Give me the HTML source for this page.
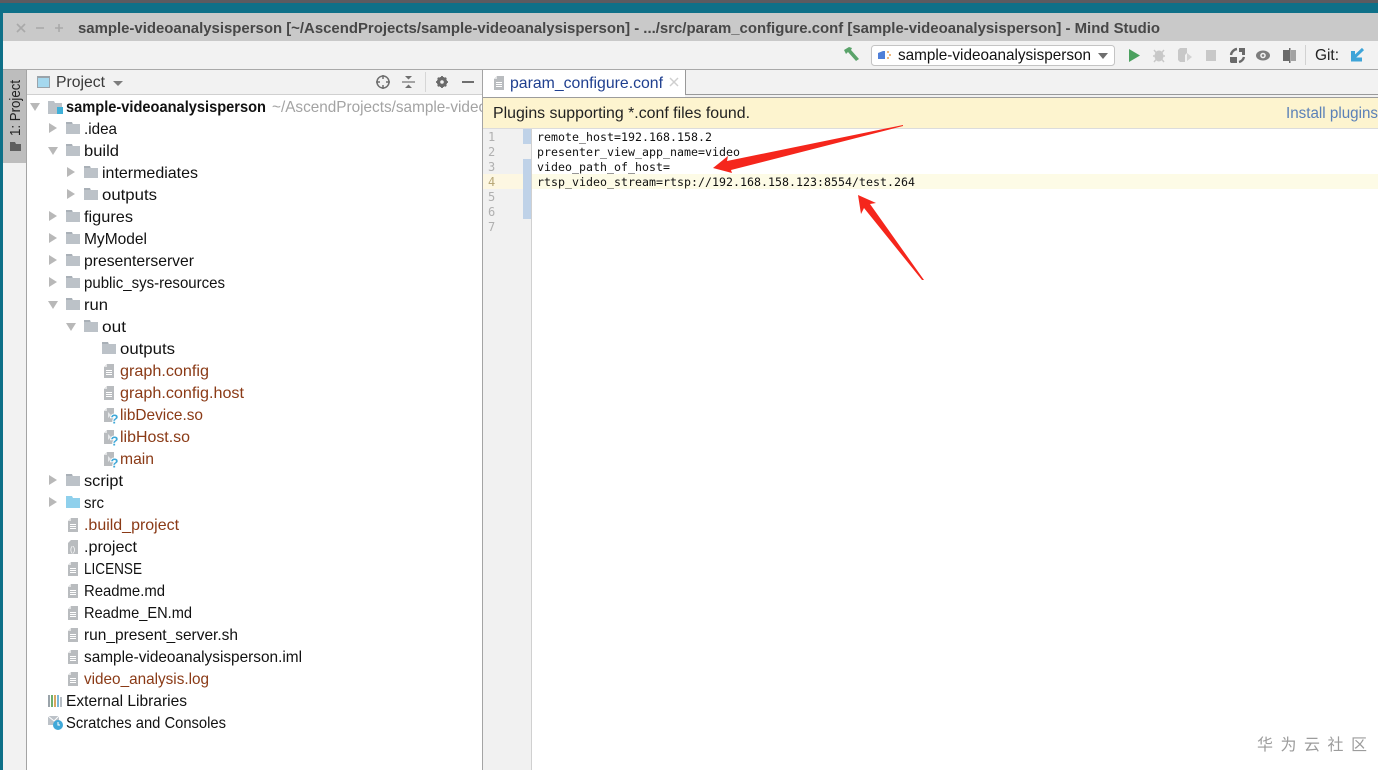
<!DOCTYPE html>
<html><head><meta charset="utf-8"><title>Mind Studio</title>
<style>
html,body{margin:0;padding:0;width:1378px;height:770px;overflow:hidden;background:#fff}
svg{display:block}
text{font-family:"Liberation Sans","DejaVu Sans",sans-serif;white-space:pre}
.t{font-size:16px;fill:#111}
.b{font-size:16px;fill:#8a3a16}
.m{font-family:"DejaVu Sans Mono","Liberation Mono",monospace;font-size:11.6px;fill:#111}
.n{font-family:"DejaVu Sans Mono","Liberation Mono",monospace;font-size:12px;fill:#b0b0b0}
</style></head><body>
<svg width="1378" height="770" viewBox="0 0 1378 770" xmlns="http://www.w3.org/2000/svg">
<defs>
<g id="fo"><path d="M0 0h6l1 2h7v10H0z" fill="#bcc2c8"/><rect y="0" width="6" height="2" fill="#a9b0b7"/></g>
<g id="fb"><path d="M0 0h6l1 2h7v10H0z" fill="#8fd0ec"/></g>
<g id="r"><path d="M0 0l8 5-8 5z" fill="#b8b8b8"/></g>
<g id="d"><path d="M0 0h10l-5 8z" fill="#b8b8b8"/></g>
<g id="f"><path d="M3 0h7v14H0V3z" fill="#b9bcbf"/><path d="M3 0v3H0z" fill="#e3e4e5"/><path d="M2 6.500h6M2 8.500h6M2 10.500h6" stroke="#fff" stroke-width="1"/></g>
<g id="q"><path d="M3 0h7v14H0V3z" fill="#b9bcbf"/><path d="M3 0v3H0z" fill="#e3e4e5"/><path d="M4 4l3 3-3 3z" fill="#e6e8ea"/><text x="6.500" y="15.500" stroke="#fff" stroke-width="2" paint-order="stroke" style="font-size:13px;font-weight:bold;fill:#3fa8d8">?</text></g>
</defs>

<!-- desktop and window -->
<rect width="1378" height="4" fill="#5b5b60"/>
<rect y="3" width="1378" height="10" fill="#0e7088"/>
<rect y="3" width="3" height="767" fill="#0e7088"/>
<rect x="3" y="13" width="1375" height="28" fill="#c9c9c9"/>
<rect x="3" y="41" width="1375" height="28" fill="#f2f2f2"/>
<rect x="3" y="69" width="1375" height="1" fill="#a9a9a9"/>

<!-- title bar -->
<path d="M17 24l8 8M25 24l-8 8" stroke="#a9a9a9" stroke-width="1.600"/>
<path d="M36 28h8" stroke="#a9a9a9" stroke-width="1.600"/>
<path d="M55 28h8M59 24v8" stroke="#a9a9a9" stroke-width="1.600"/>
<text x="78" y="33" textLength="1082" lengthAdjust="spacingAndGlyphs" style="font-size:15px;font-weight:bold;fill:#474747">sample-videoanalysisperson [~/AscendProjects/sample-videoanalysisperson] - .../src/param_configure.conf [sample-videoanalysisperson] - Mind Studio</text>

<!-- toolbar -->
<path d="M844 50l5-3 3 1-1 2 8 9-3 2-8-9-2 2z" fill="#5aa36a"/>
<rect x="871.500" y="45.500" width="243" height="20" rx="3" fill="#fff" stroke="#c4c4c4"/>
<path d="M878 53l5-2h2v8h-7z" fill="#4f7fd8"/>
<path d="M887 51h2v2h-2zM889 54h2v2h-2zM887 57h2v2h-2z" fill="#eeb87e"/>
<text x="898" y="60" textLength="193" lengthAdjust="spacingAndGlyphs" class="t">sample-videoanalysisperson</text>
<path d="M1098 53h10l-5 6z" fill="#6e6e6e"/>
<path d="M1129 49l11 6.500-11 6.500z" fill="#4ca15f"/>
<ellipse cx="1159" cy="56" rx="4.500" ry="5.500" fill="#c8c8c8"/>
<path d="M1154 50l10 12M1164 50l-10 12M1153 56h12" stroke="#c8c8c8" stroke-width="1.400"/>
<path d="M1178 50l2-2h7v5l-2 2v7h-5l-2-2z" fill="#c8c8c8"/><path d="M1187 53l5 4-5 4z" fill="#d2d2d2"/>
<rect x="1206" y="50" width="10" height="11" fill="#c8c8c8"/>
<path d="M1239 48h6v7h-3v-3h-3zM1230 57h7v6h-6l-1-1z" fill="#6a6a6a"/>
<path d="M1231 55a7 7 0 0 1 6-6M1244 57a7 7 0 0 1-5 5" stroke="#6a6a6a" stroke-width="2.400" fill="none"/>
<ellipse cx="1263" cy="55.500" rx="7" ry="5" fill="#7d7d7d"/><circle cx="1263" cy="55.500" r="2.800" fill="#f2f2f2"/><circle cx="1263" cy="55.500" r="1.300" fill="#7d7d7d"/>
<path d="M1283 50h6v-2h1.500v15H1289v-2h-6z" fill="#6a6a6a"/><rect x="1291" y="50" width="5" height="11" fill="#a3a3a3"/>
<rect x="1305" y="45" width="1" height="20" fill="#d2d2d2"/>
<text x="1315" y="60" textLength="24" lengthAdjust="spacingAndGlyphs" style="font-size:15.500px;fill:#222">Git:</text>
<path d="M1363 49l-9 8.500" stroke="#3ea4d8" stroke-width="3" fill="none"/><path d="M1351 51h4v6.500h7v4h-11z" fill="#3ea4d8"/>

<!-- left stripe -->
<rect x="3" y="70" width="23" height="700" fill="#f2f2f2"/>
<rect x="3" y="70" width="23" height="93" fill="#bdbdbd"/>
<rect x="26" y="70" width="1" height="700" fill="#a4a4a4"/>
<text transform="translate(20 136) rotate(-90)" textLength="56" lengthAdjust="spacingAndGlyphs" style="font-size:14.500px;fill:#222">1: Project</text>
<path d="M10 142h5l1 2h5v7H10z" fill="#5f5f5f"/>

<!-- project header -->
<rect x="27" y="70" width="456" height="24" fill="#f2f2f2"/>
<rect x="27" y="94" width="456" height="1" fill="#d0d0d0"/>
<rect x="37.500" y="76.500" width="12" height="11" fill="#a5d8ee" stroke="#9aa3aa"/>
<rect x="37" y="76" width="13" height="2" fill="#9aa3aa"/>
<text x="56" y="87" textLength="49" lengthAdjust="spacingAndGlyphs" style="font-size:15.500px;fill:#3a3a3a">Project</text>
<path d="M113 81h10l-5 5z" fill="#7d7d7d"/>
<circle cx="383" cy="82" r="6" fill="none" stroke="#6f6f6f" stroke-width="1.500"/>
<path d="M383 75v4M383 85v4M376 82h4M386 82h4" stroke="#6f6f6f" stroke-width="1.500"/>
<path d="M402 82h13" stroke="#6f6f6f" stroke-width="1.200"/><path d="M405 76h7l-3.500 3.500zM405 88h7l-3.500-3.500z" fill="#6f6f6f"/>
<rect x="425" y="72" width="1" height="20" fill="#d6d6d6"/>
<circle cx="442" cy="82" r="3.800" fill="none" stroke="#6a6a6a" stroke-width="2.800"/>
<path d="M442 76v12M436 82h12M437.800 77.800l8.400 8.400M446.200 77.800l-8.400 8.400" stroke="#6a6a6a" stroke-width="1.800"/>
<circle cx="442" cy="82" r="1.800" fill="#f2f2f2"/>
<rect x="462" y="81" width="12" height="2" fill="#6f6f6f"/>

<!-- tree arrows -->
<use href="#d" x="30" y="103"/>
<use href="#r" x="49" y="123"/>
<use href="#d" x="48" y="147"/>
<use href="#r" x="67" y="167"/>
<use href="#r" x="67" y="189"/>
<use href="#r" x="49" y="211"/>
<use href="#r" x="49" y="233"/>
<use href="#r" x="49" y="255"/>
<use href="#r" x="49" y="277"/>
<use href="#d" x="48" y="301"/>
<use href="#d" x="66" y="323"/>
<use href="#r" x="49" y="475"/>
<use href="#r" x="49" y="497"/>

<!-- tree icons -->
<path d="M48 101h6l1 2h7v11H48z" fill="#bcc2c8"/><rect x="57" y="107" width="6" height="7" fill="#3fb0d8"/>
<use href="#fo" x="66" y="122"/>
<use href="#fo" x="66" y="144"/>
<use href="#fo" x="84" y="166"/>
<use href="#fo" x="84" y="188"/>
<use href="#fo" x="66" y="210"/>
<use href="#fo" x="66" y="232"/>
<use href="#fo" x="66" y="254"/>
<use href="#fo" x="66" y="276"/>
<use href="#fo" x="66" y="298"/>
<use href="#fo" x="84" y="320"/>
<use href="#fo" x="102" y="342"/>
<use href="#f" x="104" y="364"/>
<use href="#f" x="104" y="386"/>
<use href="#q" x="104" y="408"/>
<use href="#q" x="104" y="430"/>
<use href="#q" x="104" y="452"/>
<use href="#fo" x="66" y="474"/>
<use href="#fb" x="66" y="496"/>
<use href="#f" x="68" y="518"/>
<path d="M71 540h7v14H68v-11z" fill="#b9bcbf"/><text x="70" y="552" style="font-size:8px;fill:#fff">()</text>
<use href="#f" x="68" y="562"/>
<use href="#f" x="68" y="584"/>
<use href="#f" x="68" y="606"/>
<use href="#f" x="68" y="628"/>
<use href="#f" x="68" y="650"/>
<use href="#f" x="68" y="672"/>
<path d="M48 695h2v12h-2z" fill="#9aa3aa"/><path d="M51 695h2v12h-2z" fill="#6fae6a"/><path d="M54 695h2v12h-2z" fill="#d8a860"/><path d="M57 695h2v12h-2z" fill="#7cb8d8"/><path d="M60 697h2v10h-2z" fill="#b6bdc4"/>
<path d="M48 716h11v9H48z" fill="#bcc2c8"/><path d="M48 716l6 5 5-5" stroke="#fff" fill="none"/><circle cx="58" cy="725" r="5" fill="#3fa8d8"/><path d="M58 722v3h2" stroke="#fff" fill="none"/>

<!-- tree text -->
<text x="66" y="112" textLength="200" lengthAdjust="spacingAndGlyphs" class="t" style="font-weight:bold">sample-videoanalysisperson</text>
<svg x="27" y="95" width="455" height="30"><text x="245" y="17" textLength="215" lengthAdjust="spacingAndGlyphs" style="font-size:16px;fill:#a3a3a3">~/AscendProjects/sample-video</text></svg>
<text x="84" y="134" textLength="33" lengthAdjust="spacingAndGlyphs" class="t">.idea</text>
<text x="84" y="156" textLength="35" lengthAdjust="spacingAndGlyphs" class="t">build</text>
<text x="102" y="178" textLength="96" lengthAdjust="spacingAndGlyphs" class="t">intermediates</text>
<text x="102" y="200" textLength="55" lengthAdjust="spacingAndGlyphs" class="t">outputs</text>
<text x="84" y="222" textLength="49" lengthAdjust="spacingAndGlyphs" class="t">figures</text>
<text x="84" y="244" textLength="63" lengthAdjust="spacingAndGlyphs" class="t">MyModel</text>
<text x="84" y="266" textLength="110" lengthAdjust="spacingAndGlyphs" class="t">presenterserver</text>
<text x="84" y="288" textLength="141" lengthAdjust="spacingAndGlyphs" class="t">public_sys-resources</text>
<text x="84" y="310" textLength="24" lengthAdjust="spacingAndGlyphs" class="t">run</text>
<text x="102" y="332" textLength="24" lengthAdjust="spacingAndGlyphs" class="t">out</text>
<text x="120" y="354" textLength="55" lengthAdjust="spacingAndGlyphs" class="t">outputs</text>
<text x="120" y="376" textLength="89" lengthAdjust="spacingAndGlyphs" class="b">graph.config</text>
<text x="120" y="398" textLength="124" lengthAdjust="spacingAndGlyphs" class="b">graph.config.host</text>
<text x="120" y="420" textLength="83" lengthAdjust="spacingAndGlyphs" class="b">libDevice.so</text>
<text x="120" y="442" textLength="70" lengthAdjust="spacingAndGlyphs" class="b">libHost.so</text>
<text x="120" y="464" textLength="34" lengthAdjust="spacingAndGlyphs" class="b">main</text>
<text x="84" y="486" textLength="39" lengthAdjust="spacingAndGlyphs" class="t">script</text>
<text x="84" y="508" textLength="20" lengthAdjust="spacingAndGlyphs" class="t">src</text>
<text x="84" y="530" textLength="95" lengthAdjust="spacingAndGlyphs" class="b">.build_project</text>
<text x="84" y="552" textLength="53" lengthAdjust="spacingAndGlyphs" class="t">.project</text>
<text x="84" y="574" textLength="58" lengthAdjust="spacingAndGlyphs" class="t">LICENSE</text>
<text x="84" y="596" textLength="81" lengthAdjust="spacingAndGlyphs" class="t">Readme.md</text>
<text x="84" y="618" textLength="108" lengthAdjust="spacingAndGlyphs" class="t">Readme_EN.md</text>
<text x="84" y="640" textLength="154" lengthAdjust="spacingAndGlyphs" class="t">run_present_server.sh</text>
<text x="84" y="662" textLength="218" lengthAdjust="spacingAndGlyphs" class="t">sample-videoanalysisperson.iml</text>
<text x="84" y="684" textLength="125" lengthAdjust="spacingAndGlyphs" class="b">video_analysis.log</text>
<text x="66" y="706" textLength="121" lengthAdjust="spacingAndGlyphs" class="t">External Libraries</text>
<text x="66" y="728" textLength="160" lengthAdjust="spacingAndGlyphs" class="t">Scratches and Consoles</text>

<!-- editor -->
<rect x="482" y="70" width="1" height="700" fill="#a4a4a4"/>
<rect x="483" y="70" width="895" height="24" fill="#f2f2f2"/>
<rect x="483" y="70" width="202" height="26" fill="#fff"/>
<rect x="685" y="70" width="1" height="25" fill="#999"/>
<rect x="686" y="94" width="692" height="1" fill="#999"/>
<rect x="483" y="95" width="895" height="2" fill="#f2f2f2"/>
<rect x="483" y="70" width="202" height="27" fill="#fff"/>
<rect x="483" y="97" width="895" height="1" fill="#9c9c9c"/>
<use href="#f" x="494" y="76"/>
<text x="510" y="88" textLength="153" lengthAdjust="spacingAndGlyphs" style="font-size:16px;fill:#1f3f8f">param_configure.conf</text>
<path d="M670 78l8 8M678 78l-8 8" stroke="#cfcfcf" stroke-width="1.500"/>

<rect x="483" y="98" width="895" height="30" fill="#fdf4cf"/>
<rect x="483" y="128" width="895" height="1" fill="#dcdcdc"/>
<text x="493" y="118" textLength="257" lengthAdjust="spacingAndGlyphs" style="font-size:15.500px;fill:#222">Plugins supporting *.conf files found.</text>
<text x="1286" y="118" textLength="92" lengthAdjust="spacingAndGlyphs" style="font-size:15.500px;fill:#5a80b8">Install plugins</text>

<rect x="483" y="129" width="48" height="641" fill="#f1f1f1"/>
<rect x="531" y="129" width="1" height="641" fill="#d0d0d0"/>
<rect x="483" y="174" width="40" height="15" fill="#fdf7e2"/>
<rect x="532" y="174" width="846" height="15" fill="#fdfbe6"/>
<rect x="523" y="129" width="8" height="15" fill="#bfd2e8"/>
<rect x="523" y="159" width="8" height="60" fill="#bfd2e8"/>
<text x="488" y="141" class="n">1</text>
<text x="488" y="156" class="n">2</text>
<text x="488" y="171" class="n">3</text>
<text x="488" y="186" class="n" style="fill:#b8a878">4</text>
<text x="488" y="201" class="n">5</text>
<text x="488" y="216" class="n">6</text>
<text x="488" y="231" class="n">7</text>
<text x="537" y="141" textLength="175" lengthAdjust="spacing" class="m">remote_host=192.168.158.2</text>
<text x="537" y="156" textLength="203" lengthAdjust="spacing" class="m">presenter_view_app_name=video</text>
<text x="537" y="171" textLength="133" lengthAdjust="spacing" class="m">video_path_of_host=</text>
<text x="537" y="186" textLength="378" lengthAdjust="spacing" class="m">rtsp_video_stream=rtsp://192.168.158.123:8554/test.264</text>

<!-- arrows -->
<path d="M903 125L727 161L728 156L713 168L732 173L731 170L903 126z" fill="#f5261c"/>
<path d="M924 280L870 204L876 203L858 195L861 214L864 208L922 280z" fill="#f5261c"/>

<!-- watermark -->
<text x="1257" y="750" textLength="110" lengthAdjust="spacing" style="font-family:'Liberation Sans','Noto Sans CJK SC',sans-serif;font-size:16px;fill:#9c9c9c">华为云社区</text>
</svg>
</body></html>
